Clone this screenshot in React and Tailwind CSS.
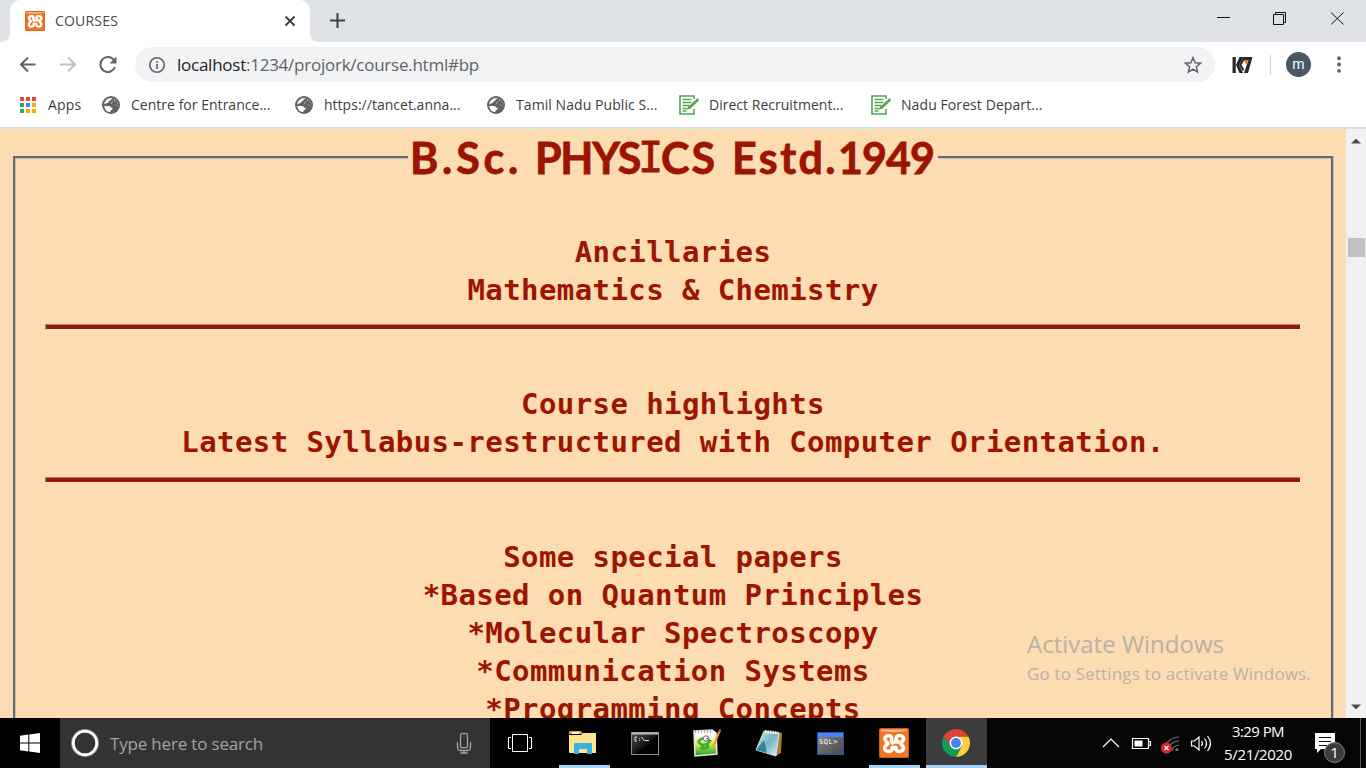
import React, { useLayoutEffect, useRef } from "react";

/* Single line of text whose tracking is adjusted to fill a given width. */
function Fit({ w, className = "", children }) {
  const ref = useRef(null);
  useLayoutEffect(() => {
    const el = ref.current;
    el.style.letterSpacing = "0px";
    const natural = el.getBoundingClientRect().width;
    el.style.letterSpacing = (w - natural) / el.textContent.length + "px";
  }, [w]);
  return (
    <span ref={ref} className={"inline-block whitespace-pre " + className}>
      {children}
    </span>
  );
}

function Xampp({ className }) {
  return (
    <svg className={className} viewBox="0 0 30 30">
      <rect width="30" height="30" rx="2.5" fill="#f47521" />
      <rect x=".5" y=".5" width="29" height="29" rx="2" fill="none" stroke="#b95412" strokeOpacity=".7" />
      <path d="M2 1.500h26v1.500q-13 2-26 0z" fill="#fac49b" opacity=".8" />
      <path
        d="M12.500 12.500C13.500 9 12 7.500 9.500 7.500C6.500 7.500 5 10.500 6.500 12.500L9 15.500L6.500 18C4.500 21 6.500 23.500 9.500 23.500C12 23.500 13.500 22 13 19.500H17C16.500 22 18 23.500 20.500 23.500C23.500 23.500 25.500 21 24 18.500L21.500 15.500L24 12.500C25.500 10 23.500 7.500 20.500 7.500C18 7.500 16.500 9 17.500 12L16 14H21M12.500 12.500L13.500 15"
        fill="none"
        stroke="#fff"
        strokeWidth="3.600"
        strokeLinecap="round"
        strokeLinejoin="round"
      />
    </svg>
  );
}

function Globe() {
  return (
    <svg className="h-[18px] w-[18px] shrink-0" viewBox="0 0 18 18">
      <circle cx="9" cy="9" r="9" fill="#5f6368" />
      <path
        d="M10.500 2.100C10 3.200 9 3.100 8.500 4.300C8.200 5.200 6.300 5 6.200 6.300C6.100 7.600 3.500 7 2.300 8.500C2.300 5 5.700 1.600 10.500 2.100zM2.200 10h4.600c1.900.1 1.900 1.700 3.400 1.700.9.600.300 2-1 2.400-.9.500-.8 1.300-.8 2C4.800 15.800 2.500 13.400 2.200 10zM12.300 2.900C14.600 4.300 16 6.500 16 9l-1.500.400c-1.500-.1-1.400-1.400-2.600-1.500H9.700c-.8-.9.100-1.900 1.200-2.100 1.300-.200 1.900-1.200 1.400-2.900z"
        fill="#fff"
      />
      <path d="M10.500 5.900l3.500-2 2 4.600-1.500.9-2.600-1.500H9.700z" fill="#5f6368" />
    </svg>
  );
}

function Sheet() {
  return (
    <svg className="h-[20px] w-[21px] shrink-0" viewBox="0 0 21 20">
      <path d="M15 4V1H1v18h14v-5" fill="none" stroke="#55a653" strokeWidth="1.600" />
      <path d="M3.500 4.500h9M3.500 7.500h9M3.500 10.500h7M3.500 13.500h5M3.500 16h4" stroke="#55a653" strokeWidth="1.300" />
      <path d="M18.500 5l-8 7.500" stroke="#55a653" strokeWidth="2.800" strokeLinecap="round" />
      <path d="M9.500 11l-1.500 4 4-1.600z" fill="#55a653" />
    </svg>
  );
}

const appDots = ["#ea4335", "#ea4335", "#ea4335", "#34a853", "#2e8df7", "#fbad05", "#34a853", "#fbad05", "#fbad05"];

const bookmarks = [
  { icon: Globe, label: "Centre for Entrance...", w: 139.5, cls: "w-[193px]" },
  { icon: Globe, label: "https://tancet.anna...", w: 136.5, cls: "w-[192px]" },
  { icon: Globe, label: "Tamil Nadu Public S...", w: 141.5, cls: "w-[192px]" },
  { icon: Sheet, label: "Direct Recruitment...", w: 134.5, cls: "w-[192px]" },
  { icon: Sheet, label: "Nadu Forest Depart...", w: 141.5, cls: "w-[192px]" },
];

function TabStrip() {
  return (
    <div className="flex h-[42px] shrink-0 bg-[#dee1e6]">
      <svg className="h-[42px] w-[10px]" viewBox="0 0 10 42">
        <path d="M10 42H0q10 0 10-10z" fill="#fff" />
      </svg>
      <div className="flex w-[300px] items-center rounded-t-[10px] bg-white pl-[15px]">
        <Xampp className="h-5 w-5" />
        <Fit w={63} className="ml-[10px] text-[14px] leading-5 text-[#45494d]">COURSES</Fit>
        <svg className="ml-auto mr-[14px] h-[12px] w-[12px]" viewBox="0 0 12 12">
          <path d="M1.500 1.500l9 9M10.500 1.500l-9 9" stroke="#3c4043" strokeWidth="2" />
        </svg>
      </div>
      <svg className="h-[42px] w-[10px]" viewBox="0 0 10 42">
        <path d="M0 42h10Q0 42 0 32z" fill="#fff" />
      </svg>
      <svg className="ml-[10px] mt-[13px] h-[15px] w-[15px]" viewBox="0 0 15 15">
        <path d="M7.500 0v15M0 7.500h15" stroke="#3c4043" strokeWidth="2" />
      </svg>
      <svg className="ml-auto h-[42px] w-[160px]" viewBox="0 0 160 42" fill="none" stroke="#111">
        <path d="M11 17.500h13" />
        <path d="M67.500 14.500h10v10h-10zM69.500 14.500v-2h10v10h-2" />
        <path d="M125 12.500l12.500 12M137.500 12.500l-12.500 12" />
      </svg>
    </div>
  );
}

function Toolbar() {
  return (
    <div className="flex h-[45px] shrink-0 items-center bg-white">
      <svg className="h-[45px] w-[135px]" viewBox="0 0 135 45" fill="none" strokeWidth="2">
        <path d="M35.500 22.500H21M28 15.500l-7 7 7 7" stroke="#5f6368" />
        <path d="M60 22.500h15M68 15.500l7 7-7 7" stroke="#bdc1c6" />
        <path d="M114 18a7.500 7.500 0 1 0 1 7" stroke="#5f6368" />
        <path d="M116.500 14.500v7h-7z" fill="#5f6368" />
      </svg>
      <div className="flex h-[35px] w-[1080px] items-center rounded-full bg-[#f1f3f4]">
        <svg className="ml-[14px] h-4 w-4" viewBox="0 0 16 16">
          <circle cx="8" cy="8" r="7.200" fill="none" stroke="#5f6368" strokeWidth="1.600" />
          <path d="M8 7v5M8 4v1.800" stroke="#5f6368" strokeWidth="1.700" />
        </svg>
        <Fit w={302} className="ml-[12px] text-[17px] leading-6 text-[#5f6368]">
          <span className="text-[#202124]">localhost</span>:1234/projork/course.html#bp
        </Fit>
        <svg className="ml-auto mr-[13px] h-[18px] w-[18px]" viewBox="0 0 18 18">
          <path d="M9 1.700l2.100 5 5.400.5-4.100 3.600 1.200 5.300L9 13.200l-4.600 2.900 1.200-5.300-4.100-3.600 5.400-.5z" fill="none" stroke="#5f6368" strokeWidth="1.500" />
        </svg>
      </div>
      <svg className="ml-[17px] h-[18px] w-[21px]" viewBox="0 0 21 18">
        <path d="M.500 1h3.300v16H.500z" fill="#2c2c2c" />
        <path d="M7.500 1H11L7 9l4 8H7.500L4 9z" fill="#222" />
        <path d="M11 1h9.500L16 17h-4l4.300-12.500H12L9.500 9l2.500 4-1 2.500L7 9z" fill="#292929" />
        <path d="M11.500 4.200h5l-1.800 4.600z" fill="#f47b20" />
      </svg>
      <div className="ml-[17px] h-5 w-px bg-[#cfd1d4]" />
      <div className="ml-[15px] flex h-[25px] w-[25px] items-center justify-center rounded-full bg-[#455a64] pb-px font-[Roboto] text-[14px] leading-none text-white">m</div>
      <svg className="ml-[26px] h-[17px] w-[4px]" viewBox="0 0 4 17" fill="#5f6368">
        <circle cx="2" cy="2.200" r="1.900" />
        <circle cx="2" cy="8.500" r="1.900" />
        <circle cx="2" cy="14.800" r="1.900" />
      </svg>
    </div>
  );
}

function BookmarkBar() {
  return (
    <div className="flex h-[42px] shrink-0 items-center border-b-2 border-[#dadce0] bg-white pb-[5px] pl-[20px] text-[14px] leading-5 text-[#3c4043]">
      <div className="flex w-[82px] items-center">
        <div className="grid w-4 grid-cols-3 gap-[2px]">
          {appDots.map((c, i) => (
            <div key={i} className="h-1 w-1" style={{ backgroundColor: c }} />
          ))}
        </div>
        <Fit w={33.5} className="ml-3">Apps</Fit>
      </div>
      {bookmarks.map(({ icon: Icon, label, w, cls }, i) => (
        <div key={label} className={"flex shrink-0 items-center " + cls}>
          <Icon />
          <Fit w={w} className={i < 3 ? "ml-[11px]" : "ml-[9px]"}>{label}</Fit>
        </div>
      ))}
    </div>
  );
}

const CW = 17.88;
function Line({ children }) {
  return (
    <div className="h-[38px] leading-[38px]">
      <Fit w={children.length * CW}>{children}</Fit>
    </div>
  );
}

function Rule() {
  return <div className="mx-[30px] h-[6px] border border-b-[#eeeeee] border-l-[#8e8e8e] border-r-[#eeeeee] border-t-[#8e8e8e] bg-[#a01500]" />;
}

function Page() {
  return (
    <div className="flex min-h-0 flex-1 bg-[#fcdcb0]">
      <main className="flex w-[1346px] flex-col overflow-hidden pl-[13px] pr-[13px] text-[#9c1500]">
        <div className="flex h-[58px] shrink-0">
          <div className="mt-[27px] w-[395px] border-l-2 border-t-2 border-[#696969] shadow-[inset_1px_1px_0_#c0c0c0]" />
          <h1 className="flex h-[58px] w-[530px] items-center pl-[2px] font-['Lato'] text-[43px] font-bold leading-[58px] [-webkit-text-stroke:0.8px_#9c1500]">
            <span className="flex w-[125px]"><Fit w={112}>B.Sc.</Fit></span>
            <span className="flex w-[197px]">
              <Fit w={105}>PHYS</Fit>
              <span className="w-[21px] text-center font-['DejaVu_Sans_Mono'] text-[42px] font-normal">
                <span className="-ml-[2px]">I</span>
              </span>
              <Fit w={56}>CS</Fit>
            </span>
            <Fit w={106}>Estd.</Fit>
            <Fit w={96}>1949</Fit>
          </h1>
          <div className="mt-[27px] w-[395px] border-r-2 border-t-2 border-[#696969] shadow-[inset_0_1px_0_#c0c0c0,1px_0_0_#c0c0c0]" />
        </div>
        <div className="min-h-0 flex-1 overflow-visible border-x-2 border-[#696969] pt-[46px] text-center font-['DejaVu_Sans_Mono'] text-[29px] font-bold shadow-[inset_1px_0_0_#c0c0c0,1px_0_0_#c0c0c0]">
          <Line>Ancillaries</Line>
          <Line>Mathematics & Chemistry</Line>
          <div className="pb-[55px] pt-[15px]"><Rule /></div>
          <Line>Course highlights</Line>
          <Line>Latest Syllabus-restructured with Computer Orientation.</Line>
          <div className="pb-[55px] pt-[16px]"><Rule /></div>
          <Line>Some special papers</Line>
          <Line>*Based on Quantum Principles</Line>
          <Line>*Molecular Spectroscopy</Line>
          <Line>*Communication Systems</Line>
          <Line>*Programming Concepts</Line>
        </div>
      </main>
      <div className="flex w-5 flex-col items-center bg-[#f1f1f1]">
        <svg className="mt-[9px] h-[6px] w-[10px]" viewBox="0 0 10 6"><path d="M0 5.500L5 .500l5 5z" fill="#505050" /></svg>
        <div className="mt-[94px] h-[19px] w-[17px] bg-[#c1c1c1]" />
        <svg className="mb-[8px] mt-auto h-[6px] w-[10px]" viewBox="0 0 10 6"><path d="M0 .500l5 5 5-5z" fill="#505050" /></svg>
      </div>
    </div>
  );
}

function Explorer() {
  return (
    <svg className="h-[26px] w-7" viewBox="0 0 28 26">
      <path d="M0 2Q0 1 1 1h11l2 3h-14z" fill="#e8a80c" />
      <path d="M3 2h7v2H3z" fill="#fff" />
      <path d="M0 5h12l2-2h13v20H1q-1 0-1-1z" fill="#fde58f" />
      <path d="M5 24V14q0-1 1-1h16q1 0 1 1v10h-5v-5h-8v5z" fill="#39b1e5" />
    </svg>
  );
}

function Terminal() {
  return (
    <svg className="h-[23px] w-7" viewBox="0 0 28 23">
      <defs>
        <linearGradient id="shine" x1="0" y1="0" x2="1" y2="1">
          <stop offset="0" stopColor="#555" />
          <stop offset=".5" stopColor="#181818" />
          <stop offset=".6" stopColor="#000" />
        </linearGradient>
      </defs>
      <rect x=".5" y=".5" width="27" height="22" fill="url(#shine)" stroke="#8d9196" />
      <path d="M1 1.500h26" stroke="#b8bdc2" strokeWidth="2" />
      <path d="M6 5H4v4h2M8.500 6v.8M8.500 8v.8M10.500 5l3 4M14 8.500h4" fill="none" stroke="#ddd" />
    </svg>
  );
}

function NotepadPlus() {
  return (
    <svg className="h-7 w-7" viewBox="0 0 28 28">
      <defs>
        <linearGradient id="grass" x1="0" y1="0" x2="0" y2="1">
          <stop offset=".25" stopColor="#f8faf3" />
          <stop offset=".55" stopColor="#d8ec52" />
          <stop offset="1" stopColor="#159b27" />
        </linearGradient>
      </defs>
      <path d="M1 2l18-1 4 3 1 21-22 2z" fill="url(#grass)" stroke="#e6e6e6" strokeWidth="1.500" />
      <path d="M2 2.500h17" stroke="#aaa" strokeWidth="3" strokeDasharray="1 2" />
      <path d="M5 13q3-4 7-4l5 3-3 3-5 1 2 3h5M5 13l4 3M16 16l-4 4-5-1" fill="none" stroke="#3dae35" strokeWidth="2.500" />
      <circle cx="13" cy="9.500" r="2.700" fill="#fff" stroke="#667" />
      <circle cx="14" cy="9.500" r=".8" fill="#222" />
      <path d="M27 1l-7 17" stroke="#e9a52b" strokeWidth="2" />
      <path d="M27.500 0l-1 3" stroke="#a64e31" strokeWidth="2.500" />
    </svg>
  );
}

function Notepad() {
  return (
    <svg className="h-7 w-7" viewBox="0 0 28 28">
      <defs>
        <linearGradient id="paper" x1="0" y1="0" x2="1" y2="1">
          <stop offset="0" stopColor="#dceff2" />
          <stop offset=".5" stopColor="#71b6c4" />
          <stop offset="1" stopColor="#e2f4f5" />
        </linearGradient>
      </defs>
      <path d="M23 3l4 1-1 20-5 3z" fill="#a77c36" />
      <path d="M9 2l15 2-3 23L1 21z" fill="url(#paper)" stroke="#cfe2e5" />
      <path d="M1 21l8-10 3 13z" fill="#247584" opacity=".8" />
      <path d="M10 2.500l13 1.500" stroke="#fff" strokeWidth="3" strokeDasharray="1.500 1" />
    </svg>
  );
}

function Sql() {
  return (
    <div className="flex h-[23px] w-[27px] flex-col border border-[#294fb6] bg-linear-to-br from-[#858585] to-[#4b4b4b]">
      <div className="h-[4px] shrink-0 bg-[#4586f5]" />
      <Fit w={19} className="ml-px mt-px self-start font-['DejaVu_Sans_Mono'] text-[7px] leading-[8px] text-white">SQL&gt;</Fit>
    </div>
  );
}

function Chrome() {
  return (
    <svg className="h-7 w-7" viewBox="0 0 28 28">
      <path d="M14 7.500h12.400A14 14 0 0 1 14 28l5.600-10.800z" fill="#ffcd40" />
      <path d="M1.880 7l6.500 10.500L14 21l5.600-3.800L14 28A14 14 0 0 1 1.880 7z" fill="#0f9d58" />
      <path d="M1.880 7A14 14 0 0 1 26.400 7.500H14L8.400 17.300z" fill="#db4437" />
      <circle cx="14" cy="14" r="6.500" fill="#fff" />
      <circle cx="14" cy="14" r="5" fill="#4285f4" />
    </svg>
  );
}

function Slot({ className = "", bar, children }) {
  return (
    <div className={"flex h-[50px] shrink-0 flex-col items-center " + className}>
      <div className="flex h-[47px] items-center pr-[2px] pt-[3px]">{children}</div>
      {bar && <div className={"h-[3px] bg-[#a4d3fa] " + bar} />}
    </div>
  );
}

function Taskbar() {
  return (
    <footer className="flex h-[50px] shrink-0 bg-[#050505]">
      <div className="flex w-[60px] items-center justify-center bg-black">
        <svg className="h-5 w-5" viewBox="0 0 20 20" fill="#fff">
          <path d="M0 2.800l8.300-1.200v7.900H0zM9.300 1.500L20 0v9.500H9.300zM0 10.500h8.300v7.900L0 17.200zM9.300 10.500H20V20L9.300 18.500z" />
        </svg>
      </div>
      <div className="flex w-[430px] items-center bg-[#333333] pl-[11px]">
        <svg className="h-7 w-7" viewBox="0 0 28 28">
          <circle cx="14" cy="14" r="12.200" fill="none" stroke="#999" strokeWidth="3.500" />
          <circle cx="14" cy="14" r="11.700" fill="none" stroke="#fff" strokeWidth="2.500" />
        </svg>
        <Fit w={153} className="ml-[11px] pt-[2px] text-[17px] leading-6 text-[#a3a3a3]">Type here to search</Fit>
        <svg className="ml-auto mr-[18px] h-[21px] w-[16px]" viewBox="0 0 16 21" fill="none" stroke="#a5a5a5" strokeWidth="1.300">
          <rect x="4.500" y=".7" width="7" height="14" rx="1.500" />
          <path d="M1.500 9v5q0 3.500 3.500 3.500h6q3.500 0 3.500-3.500V9M8 17.500V20M4.500 20h7" />
        </svg>
      </div>
      <div className="flex w-[62px] items-center justify-center bg-black">
        <svg className="mr-[2px] h-[20px] w-[24px]" viewBox="0 0 24 20" fill="none" stroke="#fff">
          <path d="M4.500 1.500h15v17h-15zM3 4.500H.500v11H3M21 4.500h2.500v11H21" />
        </svg>
      </div>
      <Slot className="w-[64px] bg-black" bar="w-[51px]"><Explorer /></Slot>
      <Slot className="w-[60px] bg-black"><Terminal /></Slot>
      <Slot className="w-[63px] bg-black"><NotepadPlus /></Slot>
      <Slot className="w-[61px] bg-black"><Notepad /></Slot>
      <Slot className="w-[63px] bg-black"><Sql /></Slot>
      <Slot className="w-[63px] bg-black" bar="w-[51px]"><Xampp className="h-[30px] w-[30px]" /></Slot>
      <Slot className="w-[61px] bg-[#3c3c3c]" bar="w-[61px]"><Chrome /></Slot>
      <svg className="h-[50px] w-[229px]" viewBox="987 718 229 50" fill="none" stroke="#fff" strokeWidth="1.200">
        <path d="M1103 747l8-8 8 8" />
        <path d="M1132.500 738.500h16v10h-16zM1149 741.500h1.500v4h-1.500" />
        <path d="M1134.500 740.500h8v6h-8z" fill="#fff" stroke="none" />
        <g stroke="#707070">
          <path d="M1164 751c0-7 7-14 15-14M1168 751c0-5 5-10 11-10M1172 751c0-3 3-6 7-6" />
          <circle cx="1177" cy="749.500" r="1.500" fill="#707070" stroke="none" />
        </g>
        <circle cx="1166.500" cy="748" r="5.500" fill="#dc2332" stroke="none" />
        <path d="M1164.500 746l4 4M1168.500 746l-4 4" />
        <path d="M1191.500 741h3l4.500-4v13l-4.500-4h-3zM1201.500 741q2 2.500 0 5M1204.500 738.500q4 5 0 10M1207.500 736q6 7.500 0 15" />
      </svg>
      <div className="flex w-[84px] flex-col items-center pt-[2px] text-[15px] leading-[22.500px] text-white">
        <Fit w={52}>3:29 PM</Fit>
        <Fit w={68}>5/21/2020</Fit>
      </div>
      <svg className="h-[50px] w-[66px]" viewBox="1300 718 66 50">
        <path d="M1315 733h20v16h-14l-4 4v-4h-2z" fill="#fff" />
        <path d="M1319 737.500h12M1319 741.500h12M1319 745.500h12" stroke="#111" />
        <circle cx="1334.500" cy="752.500" r="10" fill="#3c3c3c" stroke="#888" />
        <text x="1334.500" y="758" textAnchor="middle" fill="#fff" fontSize="15" fontFamily="Open Sans, sans-serif">1</text>
        <path d="M1360.500 718v50" stroke="#555" />
      </svg>
    </footer>
  );
}

export default function App() {
  return (
    <div className="relative flex h-[768px] w-[1366px] flex-col overflow-hidden font-['Open_Sans',sans-serif]">
      <TabStrip />
      <Toolbar />
      <BookmarkBar />
      <Page />
      <Taskbar />
      <div className="absolute left-[1027px] top-[628px] flex flex-col text-[#bbb1a4]">
        <Fit w={197} className="self-start text-[24px] leading-[31px]">Activate Windows</Fit>
        <Fit w={284} className="self-start text-[17px] leading-[29px]">Go to Settings to activate Windows.</Fit>
      </div>
    </div>
  );
}
